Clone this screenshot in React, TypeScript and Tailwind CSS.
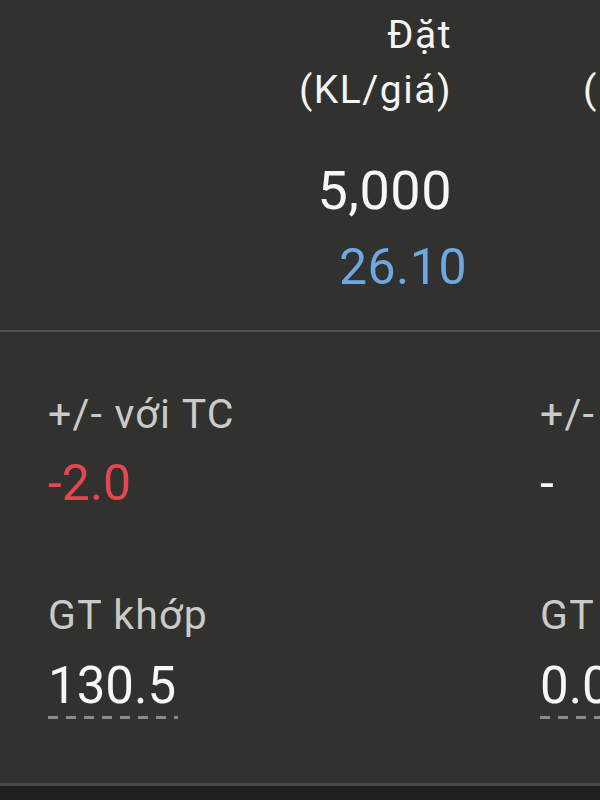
import React from "react";

function Dashed({ w }: { w: string }) {
  return (
    <div
      className={`h-[3px] ${w} bg-[repeating-linear-gradient(to_right,#8a8a8a_0px,#8a8a8a_10px,transparent_10px,transparent_18px)]`}
    />
  );
}

export default function App() {
  return (
    <div className="w-[600px] h-[800px] overflow-hidden bg-[#31312f] flex flex-col font-['Roboto',sans-serif]">
      {/* top section */}
      <div className="h-[330px] pt-[8px] pl-[168px] flex flex-row shrink-0">
        <div className="w-[284px] shrink-0 text-right">
          <div className="text-[39px] leading-[55px] tracking-[1.5px] text-[#f4f4f4]">
            <div>Đặt</div>
            <div>(KL/giá)</div>
          </div>
          <div className="mt-[43px] text-[54px] leading-[60px] tracking-[0.5px] text-[#f6f6f6]">5,000</div>
          <div className="mt-[16px] -mr-[15px] text-[50px] leading-[60px] tracking-[0.5px] text-[#6ea8de]">26.10</div>
        </div>
        <div className="w-[284px] shrink-0 text-right">
          <div className="text-[39px] leading-[55px] tracking-[1.5px] text-[#f4f4f4]">
            <div>Khớp</div>
            <div>(KL/giá)</div>
          </div>
        </div>
      </div>
      <div className="h-[2px] shrink-0 bg-[#4f4f4f]" />
      {/* bottom section */}
      <div className="flex-1 pt-[58px] pl-[48px] flex flex-row">
        <div className="w-[492px] shrink-0">
          <div className="text-[41px] leading-[48px] tracking-[1.2px] text-[#cacaca]">+/- với TC</div>
          <div className="mt-[15px] text-[50px] leading-[60px] text-[#e2484e]">-2.0</div>
          <div className="mt-[78px] text-[41px] leading-[48px] tracking-[1.2px] text-[#cacaca]">GT khớp</div>
          <div className="mt-[17px] inline-block">
            <div className="text-[51px] leading-[60px] pr-[2px] text-[#f6f6f6]">130.5</div>
            <Dashed w="w-full" />
          </div>
        </div>
        <div className="w-[492px] shrink-0 whitespace-nowrap">
          <div className="text-[41px] leading-[48px] tracking-[1.2px] text-[#cacaca]">+/- với giá đặt</div>
          <div className="mt-[15px] text-[50px] leading-[60px] text-[#f6f6f6]">-</div>
          <div className="mt-[78px] text-[41px] leading-[48px] tracking-[1.2px] text-[#cacaca]">GT đặt</div>
          <div className="mt-[17px] inline-block">
            <div className="text-[51px] leading-[60px] text-[#f6f6f6]">0.0</div>
            <Dashed w="w-full" />
          </div>
        </div>
      </div>
      <div className="h-[3px] shrink-0 bg-[#4a4a4a]" />
      <div className="h-[14px] shrink-0 bg-[#1f1f1f]" />
    </div>
  );
}
